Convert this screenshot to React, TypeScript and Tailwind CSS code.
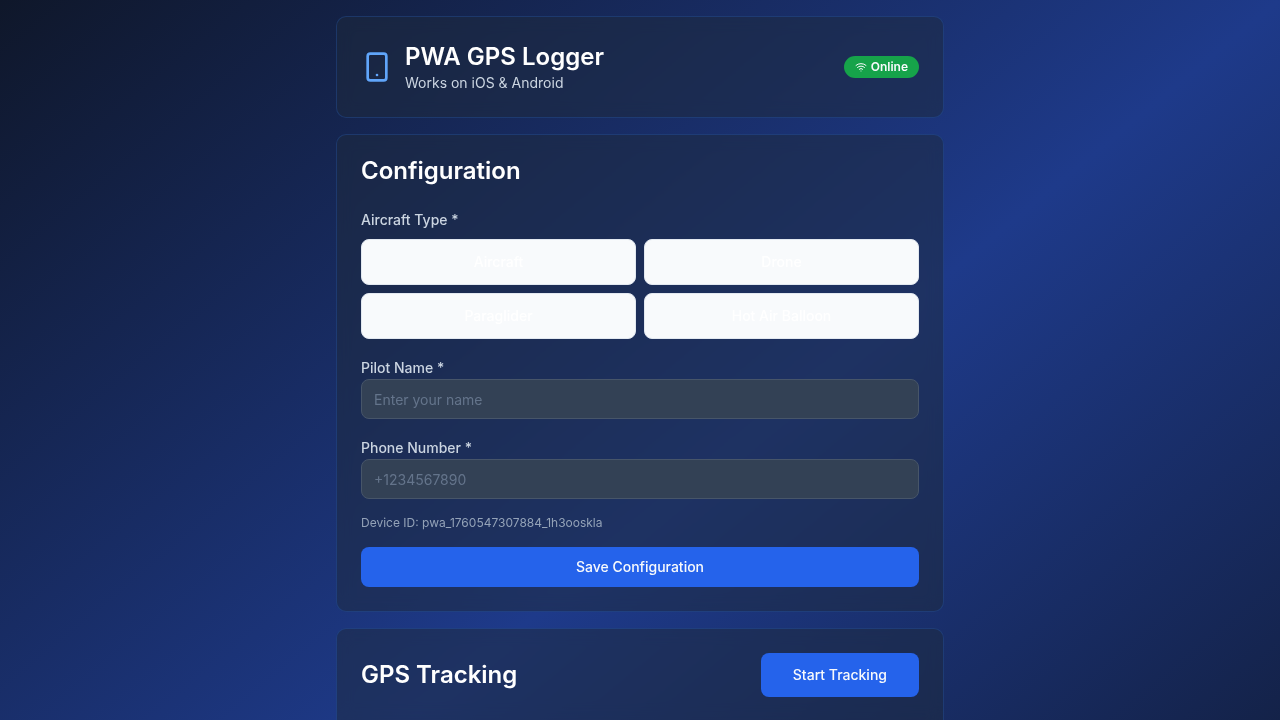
import { useState } from "react";
import type { ReactNode } from "react";
import { Smartphone, Wifi } from "lucide-react";

const aircraftTypes = ["Aircraft", "Drone", "Paraglider", "Hot Air Balloon"];

function Card({ children }: { children: ReactNode }) {
  return (
    <section className="shrink-0 rounded-[10px] border border-blue-500/20 bg-[#1e293b]/50 p-6 backdrop-blur-sm">
      {children}
    </section>
  );
}

function Field({ id, label, placeholder, type }: { id: string; label: string; placeholder: string; type: string }) {
  return (
    <div>
      <div className="leading-6">
        <label htmlFor={id} className="text-sm font-medium text-[#cbd5e1]">
          {label}
        </label>
      </div>
      <input
        id={id}
        type={type}
        placeholder={placeholder}
        className="block h-10 w-full rounded-lg border border-[#475569] bg-[#334155] px-3 text-sm text-white placeholder:text-[#64748b]"
      />
    </div>
  );
}

export default function App() {
  const [aircraft, setAircraft] = useState("");

  return (
    <div className="h-screen overflow-hidden bg-[linear-gradient(to_bottom_right,#0f172a,#1e3a8a,#0f172a)] bg-[length:100%_1058px] bg-no-repeat p-4 font-['Inter',sans-serif]">
      <main className="mx-auto flex max-w-[608px] flex-col gap-4">
        <Card>
          <header className="flex items-center justify-between">
            <div className="flex items-center gap-3">
              <Smartphone className="size-8 text-[#60a5fa]" />
              <div>
                <h1 className="text-2xl font-semibold text-white">PWA GPS Logger</h1>
                <p className="text-sm text-[#cbd5e1]">Works on iOS &amp; Android</p>
              </div>
            </div>
            <div className="flex items-center gap-1 rounded-full border border-transparent bg-[#16a34a] bg-origin-border px-2.5 py-0.5 text-xs font-semibold text-[#f8fafc]">
              <Wifi className="size-3" />
              Online
            </div>
          </header>
        </Card>

        <Card>
          <h2 className="text-2xl leading-none font-semibold text-white">Configuration</h2>
          <form className="mt-6 flex flex-col gap-4" onSubmit={(event) => event.preventDefault()}>
            <div role="group" aria-labelledby="aircraft-type">
              <div className="mb-2 leading-6">
                <span id="aircraft-type" className="text-sm font-medium text-[#cbd5e1]">
                  Aircraft Type *
                </span>
              </div>
              <div className="grid grid-cols-2 gap-2">
                {aircraftTypes.map((type) => (
                  <button
                    key={type}
                    type="button"
                    aria-pressed={aircraft === type}
                    onClick={() => setAircraft(type)}
                    className="rounded-lg border border-[#e2e8f0] bg-[#f8fafc] py-3 text-sm font-medium text-white"
                  >
                    {type}
                  </button>
                ))}
              </div>
            </div>
            <Field id="pilot-name" label="Pilot Name *" placeholder="Enter your name" type="text" />
            <Field id="phone-number" label="Phone Number *" placeholder="+1234567890" type="tel" />
            <p className="text-xs text-[#94a3b8]">Device ID: pwa_1760547307884_1h3ooskla</p>
            <button type="submit" className="h-10 rounded-lg bg-[#2563eb] text-sm font-medium text-[#f8fafc]">
              Save Configuration
            </button>
          </form>
        </Card>

        <Card>
          <div className="flex items-center justify-between pb-8">
            <h2 className="text-2xl leading-none font-semibold text-white">GPS Tracking</h2>
            <button type="button" className="h-11 rounded-lg bg-[#2563eb] px-8 text-sm font-medium text-[#f8fafc]">
              Start Tracking
            </button>
          </div>
        </Card>
      </main>
    </div>
  );
}
